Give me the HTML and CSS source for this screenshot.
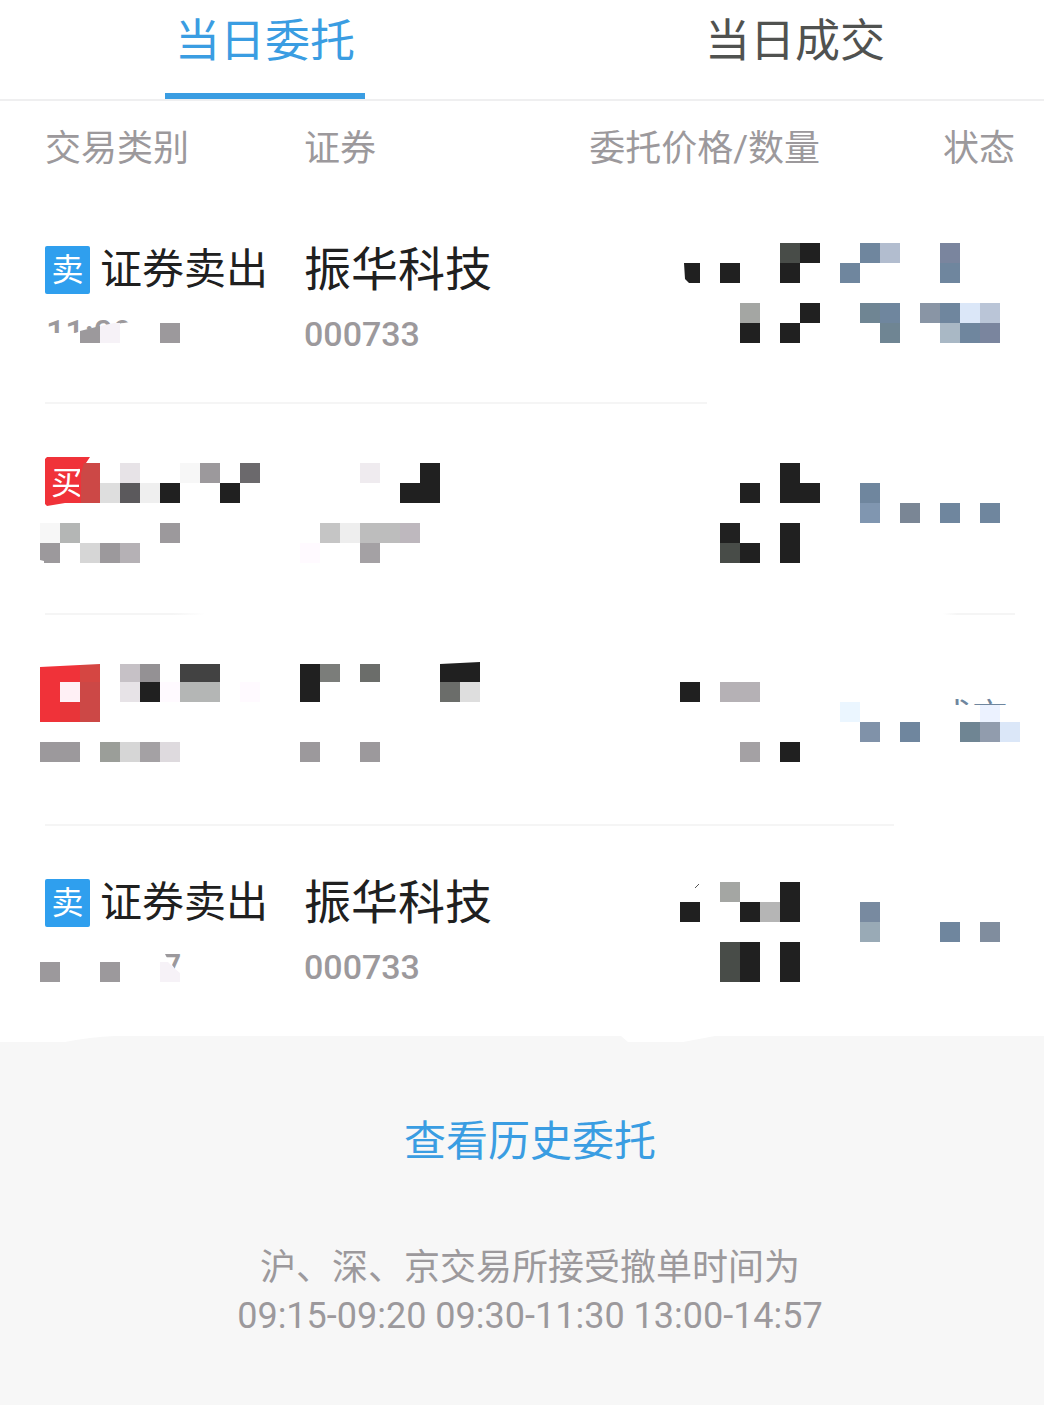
FILE: index.html
```html
<!DOCTYPE html>
<html lang="zh-CN">
<head>
<meta charset="utf-8">
<meta name="viewport" content="width=device-width, initial-scale=1">
<title>当日委托</title>
<link rel="stylesheet" href="styles.css">
</head>
<body>
<main class="page">
  <nav class="tabs" role="tablist">
    <button class="tab tab-active" type="button" role="tab" aria-selected="true">当日委托</button>
    <button class="tab" type="button" role="tab" aria-selected="false">当日成交</button>
  </nav>

  <table class="orders">
    <colgroup><col class="col-type"><col class="col-name"><col class="col-price"><col class="col-state"></colgroup>
    <thead>
      <tr><th scope="col">交易类别</th><th scope="col">证券</th><th scope="col">委托价格/数量</th><th scope="col">状态</th></tr>
    </thead>
    <tbody>
      <tr class="rule-a">
        <td class="type">
          <div class="kind"><span class="badge">卖</span><span>证券卖出</span></div>
          <svg class="time" width="304" height="48" viewBox="0 308 304 48" aria-hidden="true">
            <clipPath id="time-a"><path d="M45 316H130V322L100 327L84 330L75 333H45z"/></clipPath>
            <text class="time-text" x="46" y="344" clip-path="url(#time-a)">11:09</text>
            <path fill="#9c999c" d="M80 331L100 326V343H80zM160 323h20v20h-20z"/>
            <path fill="#f6f2f7" d="M100 326L114 323H120V343H100z"/>
          </svg>
        </td>
        <td class="name"><div class="stock">振华科技</div><div class="code">000733</div></td>
        <td><svg class="mask" width="260" height="209" viewBox="560 193 260 209" aria-hidden="true">
          <path fill="#202020" d="M684 263h16v20h-11l-4-4zM720 263h20v20h-20zM800 243h20v20h-20zM780 263h20v20h-20zM740 323h20v20h-20zM780 323h20v20h-20zM800 303h20v20h-20z"/>
          <path fill="#484c48" d="M780 243h20v20h-20z"/><path fill="#a4a6a3" d="M740 303h20v20h-20z"/>
        </svg></td>
        <td><svg class="mask" width="224" height="209" viewBox="820 193 224 209" aria-hidden="true">
          <path fill="#6f869e" d="M860 243h20v20h-20zM840 263h20v20h-20zM940 263h20v20h-20zM880 303h20v20h-20zM940 303h20v20h-20zM960 323h20v20h-20z"/>
          <path fill="#b2bdcf" d="M880 243h20v20h-20z"/><path fill="#7a859e" d="M940 243h20v20h-20zM980 323h20v20h-20z"/>
          <path fill="#6f8593" d="M860 303h20v20h-20zM880 323h20v20h-20z"/><path fill="#8995a5" d="M920 303h20v20h-20z"/>
          <path fill="#dbe7f8" d="M960 303h20v20h-20z"/><path fill="#bac5d7" d="M980 303h20v20h-20z"/><path fill="#a9b8c5" d="M940 323h20v20h-20z"/>
        </svg></td>
      </tr>
      <tr class="rule-b">
        <td><svg class="mask" width="304" height="209" viewBox="0 404 304 209" aria-hidden="true">
          <path fill="#f03239" d="M47 457H90L86 463V503H65L47 506L45 504V459z"/>
          <clipPath id="buy"><path d="M50 460H80V474L79 480V492L81 498H50z"/></clipPath>
          <text class="badge-text" x="51" y="494" clip-path="url(#buy)">买</text>
          <path fill="#cc4846" d="M84 463h16v40H81V473z"/>
          <path fill="#e7e3e7" d="M120 463h20v20h-20z"/><path fill="#f7f7f7" d="M180 463h20v20h-20zM40 523h20v20h-20z"/>
          <path fill="#9c999c" d="M200 463h20v20h-20zM160 523h20v20h-20zM40 543h20v20H44v-2l-4-1zM100 543h20v20h-20z"/>
          <path fill="#6b696c" d="M240 463h20v20h-20z"/><path fill="#dedede" d="M100 483h20v20h-20z"/>
          <path fill="#5b595c" d="M120 483h20v20h-20z"/><path fill="#efefef" d="M140 483h20v20h-20z"/>
          <path fill="#202020" d="M160 483h20v20h-20zM220 483h20v20h-20z"/>
          <path fill="#b4b6b5" d="M60 523h20v20h-20z"/><path fill="#d6d6d6" d="M80 543h20v20h-20z"/><path fill="#b5b1b5" d="M120 543h20v20h-20z"/>
        </svg></td>
        <td><svg class="mask" width="256" height="209" viewBox="304 404 256 209" aria-hidden="true">
          <path fill="#efebef" d="M360 463h20v20h-20z"/><path fill="#202020" d="M420 463h20v40h-40v-20h20z"/>
          <path fill="#c5c5c5" d="M320 523h20v20h-20z"/><path fill="#eee" d="M340 523h20v20h-20z"/><path fill="#bdbdbd" d="M360 523h40v20h-40z"/>
          <path fill="#beb8be" d="M400 523h20v20h-20z"/><path fill="#fffaff" d="M300 543h20v20h-20z"/><path fill="#a4a1a4" d="M360 543h20v20h-20z"/>
        </svg></td>
        <td><svg class="mask" width="260" height="209" viewBox="560 404 260 209" aria-hidden="true">
          <path fill="#202020" d="M740 483h20v20h-20zM780 463h20v20h20v20h-40zM720 523h20v20h-20zM740 543h20v20h-20zM780 523h20v40h-20z"/>
          <path fill="#484c48" d="M720 543h20v20h-20z"/>
        </svg></td>
        <td><svg class="mask" width="224" height="209" viewBox="820 404 224 209" aria-hidden="true">
          <path fill="#6f869e" d="M860 483h20v20h-20zM940 503h20v20h-20zM980 503h20v20h-20z"/>
          <path fill="#8096b0" d="M860 503h20v20h-20z"/><path fill="#7a8695" d="M900 503h20v20h-20z"/>
        </svg></td>
      </tr>
      <tr class="rule-c">
        <td><svg class="mask" width="304" height="209" viewBox="0 615 304 209" aria-hidden="true">
          <path fill="#f03239" d="M40 667L80 665V722H40z"/><path fill="#e83539" d="M60 702h20v20H60z"/><path fill="#d54642" d="M80 665L100 664V722H80z"/>
          <path fill="#cc4846" d="M80 682h20v40H80z"/><path fill="#fff0f5" d="M60 682h20v20H60z"/>
          <path fill="#c6c1c6" d="M120 664h20v18h-20z"/><path fill="#949194" d="M140 664h20v18h-20z"/><path fill="#424242" d="M180 664h40v18h-40z"/>
          <path fill="#e7e3e7" d="M120 682h20v20h-20z"/><path fill="#202020" d="M140 682h20v20h-20z"/><path fill="#fffaff" d="M160 682h20v20h-20zM240 682h20v20h-20z"/>
          <path fill="#b4b6b5" d="M180 682h40v20h-40z"/><path fill="#9c999c" d="M40 742h40v20H40z"/><path fill="#9b9e99" d="M100 742h20v20h-20z"/>
          <path fill="#d6d6d6" d="M120 742h20v20h-20z"/><path fill="#a4a1a4" d="M140 742h20v20h-20z"/><path fill="#dedade" d="M160 742h20v20h-20z"/>
        </svg></td>
        <td><svg class="mask" width="256" height="209" viewBox="304 615 256 209" aria-hidden="true">
          <path fill="#202020" d="M300 664h20v38h-20zM440 664L480 662V682H440z"/><path fill="#7b7d7a" d="M320 664h20v18h-20z"/>
          <path fill="#6b6d6a" d="M360 664h20v18h-20zM440 682h20v20h-20z"/><path fill="#dedede" d="M460 682h20v20h-20z"/>
          <path fill="#9c999c" d="M300 742h20v20h-20zM360 742h20v20h-20z"/>
        </svg></td>
        <td><svg class="mask" width="260" height="209" viewBox="560 615 260 209" aria-hidden="true">
          <path fill="#202020" d="M680 682h20v20h-20zM780 742h20v20h-20z"/><path fill="#b5b1b5" d="M720 682h40v20h-40z"/><path fill="#a4a1a4" d="M740 742h20v20h-20z"/>
        </svg></td>
        <td><svg class="mask" width="224" height="209" viewBox="820 615 224 209" aria-hidden="true">
          <clipPath id="state-c"><path d="M952 697h62v8h-62z"/></clipPath>
          <text class="state-text" x="936" y="730" clip-path="url(#state-c)">成交</text>
          <path fill="#ebf6ff" d="M840 702h20v20h-20z"/><path fill="#8092a9" d="M860 722h20v20h-20z"/><path fill="#6f869e" d="M900 722h20v20h-20z"/>
          <path fill="#ecf2ff" d="M980 705h20v17h-20z"/><path fill="#6f8593" d="M960 722h20v20h-20z"/><path fill="#919cad" d="M980 722h20v20h-20z"/><path fill="#dbe7f8" d="M1000 722h20v20h-20z"/>
        </svg></td>
      </tr>
      <tr>
        <td class="type">
          <div class="kind"><span class="badge">卖</span><span>证券卖出</span></div>
          <svg class="time" width="304" height="48" viewBox="0 941 304 48" aria-hidden="true">
            <path fill="#9c999c" d="M40 962h20v20H40zM100 962h20v20h-20z"/><path fill="#f6f2f7" d="M160 962h8l6 6 6 5v9h-20z"/>
            <clipPath id="time-d"><path d="M163 950H184V960L175 969L167 958z"/></clipPath>
            <text class="time-text" x="162" y="978" clip-path="url(#time-d)">7</text>
          </svg>
        </td>
        <td class="name"><div class="stock">振华科技</div><div class="code">000733</div></td>
        <td><svg class="mask" width="260" height="209" viewBox="560 826 260 209" aria-hidden="true">
          <path stroke="#555" fill="none" d="M695 888L699 884"/>
          <path fill="#202020" d="M680 902h20v20h-20zM740 902h20v20h-20zM780 882h20v40h-20zM740 942h20v40h-20zM780 942h20v40h-20z"/>
          <path fill="#a4a6a3" d="M720 882h20v20h-20z"/><path fill="#b5b5b5" d="M760 902h20v20h-20z"/><path fill="#484c48" d="M720 942h20v40h-20z"/>
        </svg></td>
        <td><svg class="mask" width="224" height="209" viewBox="820 826 224 209" aria-hidden="true">
          <path fill="#788aa0" d="M860 902h20v20h-20z"/><path fill="#99aab6" d="M860 922h20v20h-20z"/><path fill="#6f869e" d="M940 922h20v20h-20z"/><path fill="#808d9e" d="M980 922h20v20h-20z"/>
        </svg></td>
      </tr>
    </tbody>
  </table>

  <footer class="foot">
    <svg class="edge" width="1044" height="7" viewBox="0 0 1044 7" aria-hidden="true">
      <path fill="#fff" d="M0 0H1044V1H715L683 7H628L621 1H115Q90 2 65 7H0z"/>
    </svg>
    <div class="foot-body">
      <a class="history" href="#">查看历史委托</a>
      <p class="note">沪、深、京交易所接受撤单时间为<br>09:15-09:20 09:30-11:30 13:00-14:57</p>
    </div>
  </footer>
</main>
</body>
</html>
```
FILE: styles.css
```css
* { box-sizing: border-box; }

body {
  margin: 0;
  background: #f7f7f7;
  font-family: Roboto, "Noto Sans CJK SC", sans-serif;
  color: #202020;
}

.page { background: #fff; }

.tabs {
  display: grid;
  grid-template-columns: 1fr 1fr;
  gap: 32px;
  padding-left: 16px;
  border-bottom: 2px solid #efeff0;
}

.tab {
  display: flex;
  flex-direction: column;
  align-items: center;
  height: 99px;
  padding: 10px 0 0;
  border: 0;
  background: none;
  font: inherit;
  font-size: 45px;
  line-height: 64px;
  color: #505250;
}

.tab-active { color: #3a9de2; }

.tab-active::after {
  content: "";
  width: 200px;
  height: 6px;
  margin-top: auto;
  background: #3a9de2;
}

.orders {
  width: 100%;
  table-layout: fixed;
  border-collapse: collapse;
}

.col-type { width: 304px; }
.col-price { width: 260px; }
.col-state { width: 224px; }

th {
  height: 92px;
  padding: 4px 0 0;
  font-size: 36px;
  line-height: 88px;
  font-weight: 400;
  color: #9c999c;
  text-align: left;
  white-space: nowrap;
}

th:first-child { padding-left: 45px; }
th:nth-child(n + 3) { text-align: right; }
th:last-child { padding-right: 29px; }

td {
  height: 211px;
  padding: 0;
  vertical-align: top;
}

tbody tr:last-child td { height: 209px; }

/* Row separators stop where the hidden data begins */
.rule-a, .rule-b, .rule-c {
  background-image: linear-gradient(#f5f5f5, #f5f5f5);
  background-repeat: no-repeat;
  background-position: 45px 100%;
}

.rule-a { background-size: 662px 2px; }

.rule-b {
  background-image: linear-gradient(90deg, #f5f5f5 80%, #fff), linear-gradient(90deg, #fff, #f5f5f5 20%);
  background-position: 45px 100%, right 29px bottom 0;
  background-size: 160px 2px, 72px 2px;
}

.rule-c { background-size: 849px 2px; }

.mask, .time, .edge {
  display: block;
  overflow: visible;
}

.type { padding-top: 43px; }
.name { padding-top: 45px; }

.kind {
  display: flex;
  align-items: center;
  gap: 10px;
  height: 72px;
  padding: 0 0 4px 45px;
  font-size: 42px;
  line-height: 60px;
  white-space: nowrap;
}

.badge {
  width: 45px;
  height: 48px;
  border-radius: 2px;
  background: #2f9fee;
  color: #fff;
  font-size: 32px;
  line-height: 48px;
  text-align: center;
}

.badge-text { font-size: 32px; fill: #fff; }
.time-text { font-size: 34px; font-weight: 500; fill: #9c999c; }
.state-text { font-size: 36px; fill: #6f869e; }

.stock {
  font-size: 47px;
  line-height: 64px;
}

.code {
  padding-top: 8px;
  font-size: 34px;
  font-weight: 500;
  line-height: 48px;
  color: #9c999c;
}

.foot { background: #f7f7f7; }

.foot-body {
  display: flex;
  flex-direction: column;
  align-items: center;
  gap: 70px;
  padding: 68px 0 64px 16px;
}

.history {
  font-size: 42px;
  line-height: 64px;
  color: #3a9de2;
  text-decoration: none;
}

.note {
  margin: 0;
  font-size: 36px;
  font-weight: 400;
  line-height: 48px;
  color: #9c999c;
  text-align: center;
}
```
